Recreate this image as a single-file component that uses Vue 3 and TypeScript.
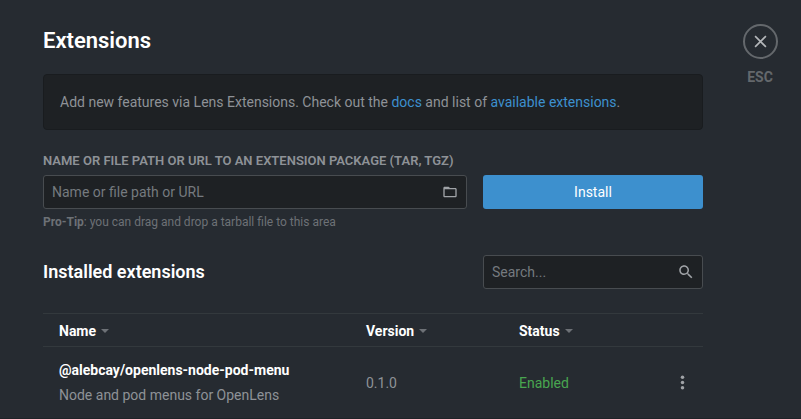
<script setup lang="ts">
import { computed, ref } from 'vue'

interface Extension {
  name: string
  description: string
  version: string
  enabled: boolean
}

const columns: string[] = ['Name', 'Version', 'Status']
const extensions: Extension[] = [
  {
    name: '@alebcay/openlens-node-pod-menu',
    description: 'Node and pod menus for OpenLens',
    version: '0.1.0',
    enabled: true,
  },
]

const installPath = ref('')
const search = ref('')

const visible = computed(() =>
  extensions.filter((e) => e.name.toLowerCase().includes(search.value.toLowerCase())),
)
</script>

<template>
  <div class="page">
    <main class="content">
      <h1 class="title">Extensions</h1>

      <p class="notice">
        Add new features via Lens Extensions. Check out the <a href="#docs">docs</a> and list of
        <a href="#extensions">available extensions</a>.
      </p>

      <form class="install" @submit.prevent>
        <label class="install-label" for="install-path">
          Name or file path or URL to an extension package (tar, tgz)
        </label>
        <div class="install-row">
          <div class="field path-field">
            <input id="install-path" v-model="installPath" type="text" placeholder="Name or file path or URL" />
            <button class="icon-button" type="button" aria-label="Browse">
              <svg class="icon" viewBox="0 0 24 24">
                <path d="M20 6h-8l-2-2H4c-1.1 0-1.99.9-1.99 2L2 18c0 1.1.9 2 2 2h16c1.1 0 2-.9 2-2V8c0-1.1-.9-2-2-2zm0 12H4V8h16v10z" />
              </svg>
            </button>
          </div>
          <button class="install-button" type="submit">Install</button>
        </div>
        <small class="hint"><b>Pro-Tip</b>: you can drag and drop a tarball file to this area</small>
      </form>

      <section class="installed">
        <header class="installed-header">
          <h2 class="subtitle">Installed extensions</h2>
          <div class="field search-field">
            <input v-model="search" type="text" placeholder="Search..." aria-label="Search" />
            <svg class="icon search-icon" viewBox="0 0 24 24">
              <path d="M15.5 14h-.79l-.28-.27C15.41 12.59 16 11.11 16 9.5 16 5.91 13.09 3 9.5 3S3 5.91 3 9.5 5.91 16 9.5 16c1.61 0 3.09-.59 4.23-1.57l.27.28v.79l5 4.99L20.49 19l-4.99-5zm-6 0C7.01 14 5 11.99 5 9.5S7.01 5 9.5 5 14 7.01 14 9.5 11.99 14 9.5 14z" />
            </svg>
          </div>
        </header>

        <table class="table">
          <colgroup>
            <col />
            <col class="col-data" />
            <col class="col-data" />
            <col class="col-menu" />
          </colgroup>
          <thead>
            <tr>
              <th v-for="column in columns" :key="column" scope="col">
                <span class="heading">
                  {{ column }}
                  <svg class="arrow" viewBox="0 0 8 4"><path d="M0 0h8L4 4z" /></svg>
                </span>
              </th>
              <td></td>
            </tr>
          </thead>
          <tbody>
            <tr v-for="extension in visible" :key="extension.name">
              <td>
                <div class="name">{{ extension.name }}</div>
                <div class="description">{{ extension.description }}</div>
              </td>
              <td>{{ extension.version }}</td>
              <td :class="{ enabled: extension.enabled }">
                {{ extension.enabled ? 'Enabled' : 'Disabled' }}
              </td>
              <td>
                <button class="icon-button" type="button" aria-label="Actions">
                  <svg class="kebab" viewBox="0 0 24 24">
                    <circle cx="12" cy="6" r="2" />
                    <circle cx="12" cy="12" r="2" />
                    <circle cx="12" cy="18" r="2" />
                  </svg>
                </button>
              </td>
            </tr>
          </tbody>
        </table>
      </section>
    </main>

    <aside class="rail">
      <button class="close" type="button" aria-label="Close">
        <svg class="close-icon" viewBox="0 0 12 12"><path d="M1 1l10 10M11 1L1 11" /></svg>
      </button>
      <span class="esc">ESC</span>
    </aside>
  </div>
</template>

<style>
body {
  background: #262b31;
}
</style>

<style scoped>
.page {
  display: flex;
  min-height: 100vh;
  box-sizing: border-box;
  border-bottom: 1px solid #1f2328;
  background: #262b31;
  color: #8e9297;
  font: 14px/20px Roboto, sans-serif;
}

.content {
  flex: 1;
  min-width: 0;
  padding: 28px 0 0 43px;
}

.title,
.subtitle {
  margin: 0;
  color: #fff;
  font-weight: 600;
}

.title {
  font-size: 22px;
  line-height: 26px;
}

.subtitle {
  font-size: 18px;
  line-height: 24px;
}

.notice {
  margin: 20px 0 0;
  padding: 17px 16px;
  border: 1px solid #191c1f;
  border-radius: 4px;
  background: #1e2124;
}

a {
  color: #3d90ce;
  text-decoration: none;
}

.install {
  display: flex;
  flex-direction: column;
  margin-top: 21px;
}

.install-label {
  font-size: 13px;
  font-weight: 600;
  text-transform: uppercase;
}

.install-row {
  display: flex;
  gap: 16px;
  margin-top: 4px;
}

.field {
  display: flex;
  align-items: center;
  box-sizing: border-box;
  height: 34px;
  padding: 0 8px;
  border: 1px solid #484c50;
  border-radius: 3px;
  background: #1e2124;
}

.path-field {
  flex: 1;
}

.field input {
  flex: 1;
  min-width: 0;
  padding: 0;
  border: 0;
  outline: 0;
  background: none;
  color: #a0a3a7;
  font: inherit;
}

.field input::placeholder {
  color: #757a7f;
  opacity: 1;
}

.icon {
  display: block;
  width: 16px;
  height: 16px;
  fill: #a0a3a7;
}

.search-icon {
  width: 18px;
  height: 18px;
}

.icon-button {
  display: block;
  padding: 0;
  border: 0;
  background: none;
}

.install-button {
  width: 220px;
  height: 34px;
  border: 0;
  border-radius: 3px;
  background: #3d90ce;
  color: #fff;
  font: inherit;
}

.hint {
  margin-top: 3px;
  color: #6d7176;
  font-size: 12px;
}

.installed {
  margin-top: 23px;
}

.installed-header {
  display: flex;
  align-items: center;
  justify-content: space-between;
}

.search-field {
  width: 220px;
  padding-right: 7px;
}

.table {
  width: 100%;
  margin-top: 24px;
  border-collapse: collapse;
  table-layout: fixed;
}

.col-data {
  width: 153px;
}

.col-menu {
  width: 31px;
}

th,
td {
  padding: 0;
  text-align: left;
}

th:first-child,
td:first-child {
  padding-left: 16px;
}

thead tr {
  height: 33px;
  border-top: 1px solid #33393d;
  border-bottom: 1px solid #33393d;
}

th {
  padding-top: 2px;
  color: #fff;
  font-weight: 700;
}

tbody td {
  height: 71px;
}

.heading {
  display: flex;
  align-items: center;
  gap: 5px;
}

.arrow {
  display: block;
  width: 8px;
  height: 4px;
  fill: #6d7176;
}

.name {
  margin-bottom: 5px;
  color: #fff;
  font-weight: 700;
}

.enabled {
  color: #49a650;
}

.kebab {
  display: block;
  width: 21px;
  height: 21px;
  fill: #a0a3a7;
}

.rail {
  display: flex;
  flex-direction: column;
  align-items: center;
  width: 98px;
  padding: 24px 0 0 16px;
  box-sizing: border-box;
}

.close {
  display: flex;
  align-items: center;
  justify-content: center;
  width: 35px;
  height: 35px;
  padding: 0;
  border: 2px solid #64686c;
  border-radius: 50%;
  background: none;
}

.close-icon {
  width: 13px;
  height: 13px;
  fill: none;
  stroke: #b4b7ba;
  stroke-width: 1.5;
}

.esc {
  margin-top: 8px;
  color: #64686c;
  font-weight: 700;
}
</style>
